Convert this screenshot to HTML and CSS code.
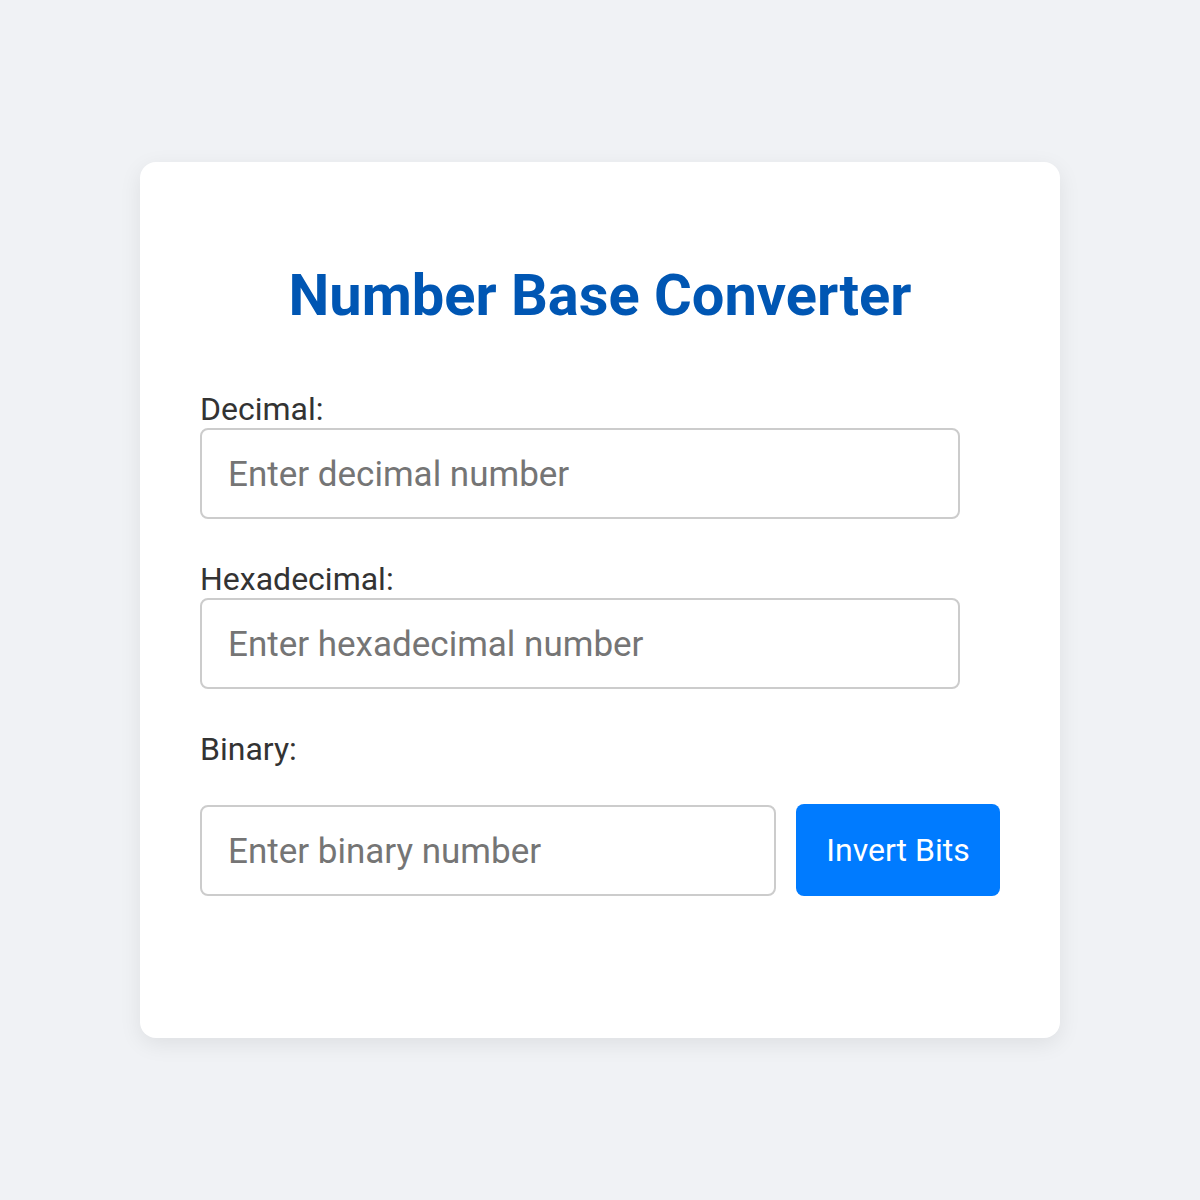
FILE: index.html
```html
<!DOCTYPE html>
<html lang="en">
<head>
<meta charset="utf-8">
<title>Number Base Converter</title>
<link rel="stylesheet" href="styles.css">
</head>
<body>
<main class="card">
  <h1 class="title">Number Base Converter</h1>
  <div class="field">
    <label class="label" for="dec">Decimal:</label>
    <input class="input" id="dec" type="text" placeholder="Enter decimal number">
  </div>
  <div class="field">
    <label class="label" for="hex">Hexadecimal:</label>
    <input class="input" id="hex" type="text" placeholder="Enter hexadecimal number">
  </div>
  <div class="field field-last">
    <label class="label" for="bin">Binary:</label>
    <div class="row">
      <input class="input input-bin" id="bin" type="text" placeholder="Enter binary number">
      <button class="btn" type="button">Invert Bits</button>
    </div>
  </div>
</main>
</body>
</html>
```
FILE: styles.css
```css
html, body {
  margin: 0;
  padding: 0;
}
body {
  background: #f0f2f5;
  font-family: Roboto, "Liberation Sans", sans-serif;
  padding-top: 162px;
  min-height: 1200px;
  box-sizing: border-box;
}
.card {
  width: 920px;
  height: 876px;
  box-sizing: border-box;
  margin: 0 auto;
  background: #fff;
  border-radius: 16px;
  box-shadow: 0 6px 22px rgba(0, 0, 0, 0.08);
  padding: 60px;
}
.title {
  margin: 39px 0 62px;
  font-size: 57.8px;
  line-height: 68px;
  font-weight: 700;
  color: #0056b3;
  text-align: center;
}
.field {
  margin-bottom: 42px;
}
.label {
  display: block;
  font-size: 32px;
  line-height: 36px;
  color: #333;
  margin-bottom: 1px;
}
.input {
  display: block;
  width: 760px;
  height: 91px;
  box-sizing: border-box;
  border: 2px solid #ccc;
  border-radius: 8px;
  padding: 2px 26px 0;
  font-family: Roboto, "Liberation Sans", sans-serif;
  font-size: 35px;
  color: #333;
  background: #fff;
  outline: none;
}
.input::placeholder {
  color: #757575;
}
.row {
  display: flex;
  align-items: center;
  gap: 20px;
  margin-top: 37px;
}
.input-bin {
  width: 576px;
}
.btn {
  width: 204px;
  height: 92px;
  border: none;
  border-radius: 8px;
  background: #007bff;
  color: #fff;
  font-family: Roboto, "Liberation Sans", sans-serif;
  font-size: 32px;
  padding: 0;
}
```
